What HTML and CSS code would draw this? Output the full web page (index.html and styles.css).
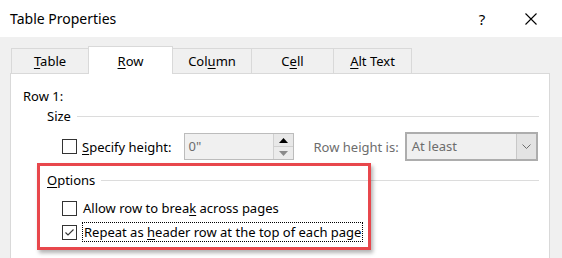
FILE: index.html
```html
<!DOCTYPE html>
<html>
<head>
	<meta charset="utf-8"/>
	<title>Table Properties</title>
	<link rel="stylesheet" href="styles.css">
</head>
<body>
	<div class="titlebar">
		<div class="title">Table Properties</div>
		<div class="help">?</div>
		<div class="close">
			<svg width="12" height="12" viewBox="0 0 12 12"><path d="M0.5 0.5L11.5 11.5M11.5 0.5L0.5 11.5" stroke="#000" stroke-width="1.1" fill="none"/></svg>
		</div>
	</div>
	<div class="body">
		<div class="tabs">
			<div class="tab t1"><u>T</u>able</div>
			<div class="tab t2 active"><u>R</u>ow</div>
			<div class="tab t3">Col<u>u</u>mn</div>
			<div class="tab t4">C<u>e</u>ll</div>
			<div class="tab t5"><u>A</u>lt Text</div>
		</div>
		<div class="panel">
			<div class="rowname">Row 1:</div>
			<div class="legend"><span>Size</span><div class="rule"></div></div>
			<div class="sizerow">
				<div class="check"></div>
				<div class="lbl"><u>S</u>pecify height:</div>
				<div class="spin">
					<div class="spinval">0"</div>
					<div class="spinbtns">
						<div class="up"><svg width="9" height="5" viewBox="0 0 9 5"><path d="M0 5L4.5 0L9 5Z" fill="#000"/></svg></div>
						<div class="down"><svg width="9" height="5" viewBox="0 0 9 5"><path d="M0 0L4.5 5L9 0Z" fill="#8a8a8a"/></svg></div>
					</div>
				</div>
				<div class="lbl dim">Row height is:</div>
				<div class="select">
					<div class="selval">At least</div>
					<div class="selbtn"><svg width="9" height="5" viewBox="0 0 9 5"><path d="M0.5 0.5L4.5 4.5L8.5 0.5" stroke="#6d6d6d" fill="none"/></svg></div>
				</div>
			</div>
			<div class="legend opts"><span><u>O</u>ptions</span><div class="rule"></div></div>
			<div class="optrow first">
				<div class="check"></div>
				<div class="lbl">Allow row to brea<u>k</u> across pages</div>
			</div>
			<div class="optrow">
				<div class="check"><svg width="13" height="13" viewBox="0 0 13 13"><path d="M2.5 6.5L5 9L10.5 3.5" stroke="#333" stroke-width="1.1" fill="none"/></svg></div>
				<div class="lbl focus">Repeat as <u>h</u>eader row at the top of each page</div>
			</div>
			<div class="highlight"></div>
		</div>
	</div>
</body>
</html>
```
FILE: styles.css
```css
html, body{height: 100%;}
body{margin: 0; background-color: #f0f0f0; font-family: "Noto Sans", "Open Sans", sans-serif; font-size: 13px; color: #000; overflow: hidden;}
u{text-decoration-thickness: 1px; text-underline-offset: 2px;}

.titlebar{height: 37px; background-color: #fff; display: flex; align-items: center;}
.title{font-size: 14px; padding-left: 10px; flex: 1;}
.help{font-size: 15px; width: 12px; margin-right: 37px; text-align: center;}
.close{width: 12px; margin-right: 25px; display: flex;}

.body{padding: 9px 0 0 10px;}
.tabs{display: flex; height: 27px; padding-left: 1px; align-items: flex-end;}
.tab{height: 25px; box-sizing: border-box; border: 1px solid #d9d9d9; border-bottom: none; margin-right: -1px;
	background-color: #f0f0f0; text-align: center; line-height: 25px; white-space: nowrap;}
.tab.active{height: 28px; background-color: #fff; position: relative; z-index: 1; margin-bottom: -1px; line-height: 28px;}
.t1{width: 78px;}
.t2{width: 85px;}
.t3{width: 80px;}
.t4{width: 83px;}
.t5{width: 79px;}

.panel{width: 540px; height: 185px; box-sizing: border-box; background-color: #fff; border: 1px solid #d9d9d9;
	border-bottom: none; padding: 12px 10px 0 12px; position: relative;}
.rowname{height: 20px; line-height: 20px;}
.legend{display: flex; align-items: center; height: 20px; line-height: 20px; margin-left: 24px;}
.legend span{margin-right: 6px;}
.rule{flex: 1; height: 1px; background-color: #dcdcdc;}
.opts{margin-top: 9px;}

.check{width: 15px; height: 15px; box-sizing: border-box; border: 1px solid #333; background-color: #fff;
	display: flex; align-items: center; justify-content: center; flex: none;}
.lbl{line-height: 20px; white-space: nowrap;}
.dim{color: #6d6d6d;}

.sizerow{display: flex; align-items: center; height: 29px; margin-top: 6px; margin-left: 39px;}
.sizerow .lbl{margin-left: 5px;}
.spin{width: 110px; height: 27px; box-sizing: border-box; border: 1px solid #bcbcbc; background-color: #f0f0f0;
	display: flex; margin-left: 13px; margin-right: 14px; flex: none;}
.spinval{flex: 1; color: #6d6d6d; line-height: 25px; padding-left: 3px;}
.spinbtns{width: 19px; display: flex; flex-direction: column; border-left: 1px solid #d0d0d0;}
.spinbtns div{flex: 1; display: flex; align-items: center; justify-content: center;}
.up{background-color: #e8e8e8; border-bottom: 1px solid #d0d0d0;}
.down{background-color: #ebebeb;}
.select{width: 133px; height: 29px; box-sizing: border-box; border: 2px solid #adadad; background-color: #f0f0f0;
	display: flex; margin-left: 6px; flex: none;}
.selval{flex: 1; color: #6d6d6d; line-height: 25px; padding-left: 5px;}
.selbtn{width: 19px; border-left: 1px solid #c8c8c8; background-color: #e3e3e3; display: flex; align-items: center; justify-content: center;}

.optrow{display: flex; align-items: center; height: 24px; margin-left: 39px;}
.optrow.first{margin-top: 6px;}
.optrow .lbl{margin-left: 5px; padding: 0 1px;}
.focus{border: 1px dotted #000; line-height: 18px;}

.highlight{position: absolute; left: 26px; top: 89px; width: 334px; height: 87px; box-sizing: border-box;
	border: 3px solid #e8474c; box-shadow: 2px 3px 4px rgba(0,0,0,0.3);}
```
